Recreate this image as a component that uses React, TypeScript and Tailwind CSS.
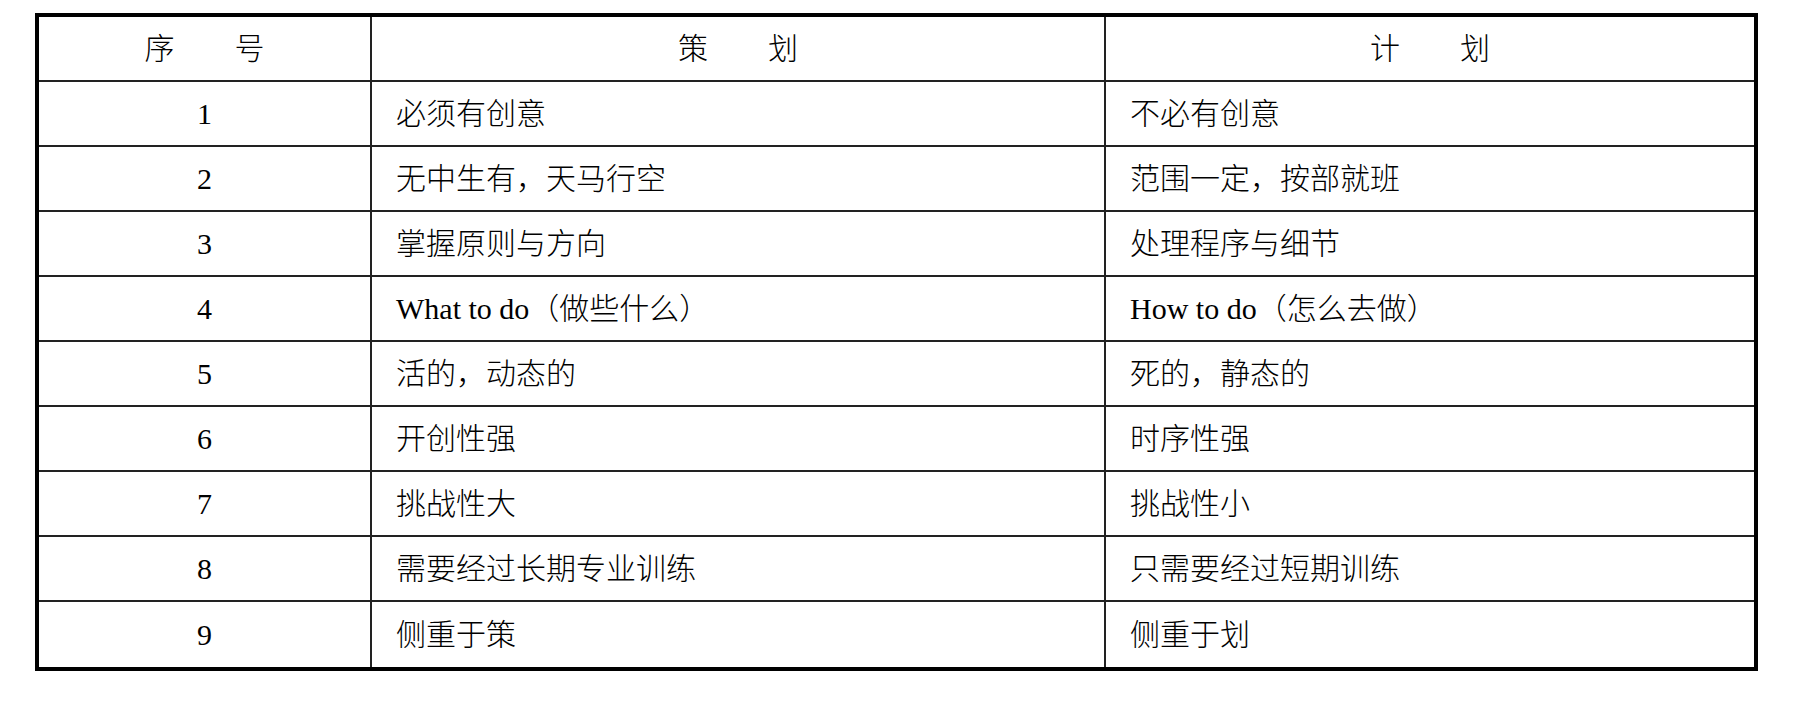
import React from 'react';

const rows: Array<{ no: string; plan: string; schedule: string }> = [
  { no: '1', plan: '必须有创意', schedule: '不必有创意' },
  { no: '2', plan: '无中生有，天马行空', schedule: '范围一定，按部就班' },
  { no: '3', plan: '掌握原则与方向', schedule: '处理程序与细节' },
  { no: '4', plan: 'What to do（做些什么）', schedule: 'How to do（怎么去做）' },
  { no: '5', plan: '活的，动态的', schedule: '死的，静态的' },
  { no: '6', plan: '开创性强', schedule: '时序性强' },
  { no: '7', plan: '挑战性大', schedule: '挑战性小' },
  { no: '8', plan: '需要经过长期专业训练', schedule: '只需要经过短期训练' },
  { no: '9', plan: '侧重于策', schedule: '侧重于划' },
];

const Row = ({ a, b, c, header, last }: { a: string; b: string; c: string; header?: boolean; last?: boolean }) => (
  <div className={`flex h-[65px] ${last ? '' : 'border-b-2 border-[#222]'}`}>
    <div className="w-[333px] flex items-center justify-center border-r-2 border-[#222]">{a}</div>
    <div className={`w-[734px] flex items-center border-r-2 border-[#222] ${header ? 'justify-center' : 'pl-6'}`}>{b}</div>
    <div className={`flex-1 flex items-center ${header ? 'justify-center' : 'pl-6'}`}>{c}</div>
  </div>
);

export default function App() {
  return (
    <div
      className="w-[1813px] h-[702px] bg-white pt-[13px] pl-[35px] text-black text-[30px] leading-none font-light"
      style={{ fontFamily: '"Liberation Serif", "Noto Sans CJK SC", serif' }}
    >
      <div className="w-[1723px] border-4 border-black flex flex-col">
        <Row a="序　　号" b="策　　划" c="计　　划" header />
        {rows.map((r, i) => (
          <Row key={r.no} a={r.no} b={r.plan} c={r.schedule} last={i === rows.length - 1} />
        ))}
      </div>
    </div>
  );
}
